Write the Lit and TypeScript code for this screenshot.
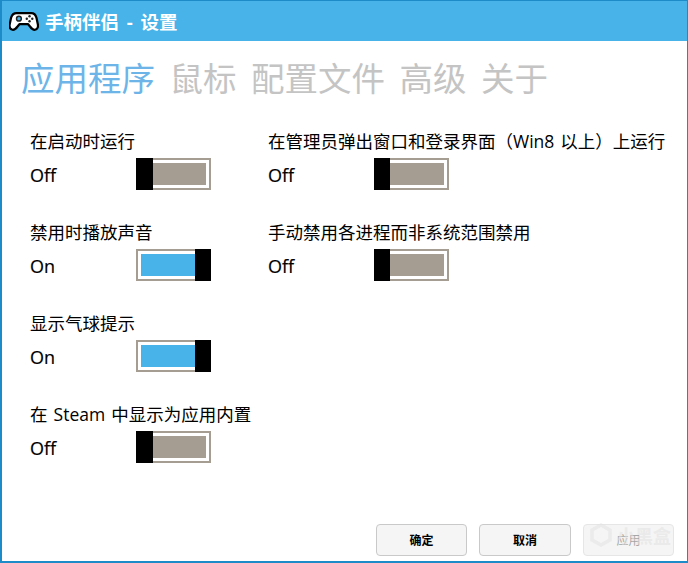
import { LitElement, html, css, svg } from 'lit';
import { customElement, property } from 'lit/decorators.js';

const FONT = css`"Open Sans", "Noto Sans CJK SC", sans-serif`;

@customElement('toggle-setting')
export class ToggleSetting extends LitElement {
  @property({ type: String }) label = '';
  @property({ type: Boolean }) on = false;

  static styles = css`
    :host {
      display: block;
      height: 91px;
      font-family: ${FONT};
      color: #000;
    }

    .label {
      font-size: 17.500px;
      line-height: 22px;
      white-space: nowrap;
      word-spacing: 1.500px;
    }

    .row {
      display: flex;
      align-items: center;
      margin-top: 6px;
      height: 32px;
    }

    .value {
      width: 106px;
      font-size: 18px;
      padding-top: 2px;
      -webkit-text-stroke: 0.2px #000;
    }

    .track {
      box-sizing: border-box;
      width: 75px;
      height: 32px;
      border: 2px solid #a59d91;
      display: flex;
      position: relative;
    }

    .fill {
      flex: 1;
      border: 3px solid #fff;
      background: #a59d91;
    }

    .on .fill {
      background: #47b3e8;
    }

    .thumb {
      position: absolute;
      top: -2px;
      bottom: -2px;
      left: -2px;
      width: var(--thumb-width, 17px);
      background: #000;
    }

    .on .thumb {
      left: auto;
      right: -2px;
      width: 16px;
    }
  `;

  render() {
    return html`
      <div class="label">${this.label}</div>
      <div class="row">
        <div class="value">${this.on ? 'On' : 'Off'}</div>
        <div class="track ${this.on ? 'on' : ''}">
          <div class="fill"></div>
          <div class="thumb"></div>
        </div>
      </div>
    `;
  }
}

@customElement('app-root')
export class AppRoot extends LitElement {
  static styles = css`
    :host {
      display: block;
      width: 688px;
      height: 563px;
    }

    .window {
      box-sizing: border-box;
      width: 688px;
      height: 563px;
      position: relative;
      display: flex;
      flex-direction: column;
      background: #fff;
      border: 1px solid #1c8bc8;
      border-width: 1px 1px 2px 2px;
      font-family: ${FONT};
    }

    .titlebar {
      height: 40px;
      flex: none;
      background: #47b3e8;
      display: flex;
      align-items: center;
      padding-left: 7px;
      gap: 6px;
      color: #fff;
      font-size: 18.500px;
      font-weight: 700;
      word-spacing: 3px;
    }

    .tabs {
      display: flex;
      gap: 14.500px;
      padding: 12px 0 0 19px;
      font-size: 33.500px;
      line-height: 50px;
      color: #c4c4c4;
    }

    .tabs .active {
      color: #6db5e8;
    }

    .grid {
      display: grid;
      grid-template-columns: 238px 1fr;
      grid-template-rows: repeat(4, 91px);
      grid-auto-flow: column;
      padding: 27px 0 0 28px;
    }

    .second {
      grid-column: 2;
      --thumb-width: 16px;
    }

    .buttons {
      margin-top: auto;
      display: flex;
      gap: 12px;
      padding: 0 0 5px 374px;
    }

    .btn {
      box-sizing: border-box;
      width: 91px;
      height: 32px;
      border: 1px solid #c9c9c9;
      border-radius: 4px;
      background: #f5f5f5;
      font-size: 12px;
      font-weight: 700;
      color: #000;
      display: flex;
      align-items: center;
      justify-content: center;
    }

    .btn.wide {
      width: 92px;
    }

    .btn.disabled {
      border-color: #e6e6e6;
      color: #a6a6a6;
      font-weight: 400;
    }

    .mark {
      position: absolute;
      right: 16px;
      bottom: 13px;
      display: flex;
      align-items: center;
      gap: 5px;
      color: rgba(225, 225, 225, 0.55);
      font-size: 18px;
      font-weight: 700;
    }
  `;

  private controller() {
    return svg`
      <svg width="30" height="24" viewBox="0 0 32 26">
        <path d="M8 4.500h16c3 0 4.500 1.500 5.500 5l1.500 7c.6 3-.5 5.500-3 6-2.500.5-4-1.500-5.500-3.500l-2-2.500H11l-2 2.500C7.500 21 6 23 3.500 22.500c-2.500-.5-3.600-3-3-6l1.500-7c1-3.500 2.500-5 6-5z"
          fill="#fff" stroke="#000" stroke-width="2.400" stroke-linejoin="round"/>
        <circle cx="10.500" cy="10.500" r="2.600" fill="#47b3e8" stroke="#222" stroke-width="1.600"/>
        <circle cx="22" cy="7.800" r="1.300" fill="#222"/>
        <circle cx="25" cy="10.500" r="1.300" fill="#222"/>
        <circle cx="19" cy="10.500" r="1.300" fill="#222"/>
        <circle cx="22" cy="13.200" r="1.300" fill="#222"/>
      </svg>
    `;
  }

  render() {
    return html`
      <div class="window">
        <div class="titlebar">${this.controller()}<span>手柄伴侣 - 设置</span></div>
        <div class="tabs">
          <span class="active">应用程序</span>
          <span>鼠标</span>
          <span>配置文件</span>
          <span>高级</span>
          <span>关于</span>
        </div>
        <div class="grid">
          <toggle-setting label="在启动时运行"></toggle-setting>
          <toggle-setting label="禁用时播放声音" on></toggle-setting>
          <toggle-setting label="显示气球提示" on></toggle-setting>
          <toggle-setting label="在 Steam 中显示为应用内置"></toggle-setting>
          <toggle-setting class="second" label="在管理员弹出窗口和登录界面（Win8 以上）上运行"></toggle-setting>
          <toggle-setting class="second" label="手动禁用各进程而非系统范围禁用"></toggle-setting>
        </div>
        <div class="buttons">
          <div class="btn">确定</div>
          <div class="btn wide">取消</div>
          <div class="btn disabled">应用</div>
        </div>
        <div class="mark">
          <svg width="22" height="24" viewBox="0 0 22 24" fill="none" stroke="currentColor" stroke-width="3.500">
            <path d="M11 2l9 5v10l-9 5-9-5V7z"/>
          </svg>
          <span>小黑盒</span>
        </div>
      </div>
    `;
  }
}
